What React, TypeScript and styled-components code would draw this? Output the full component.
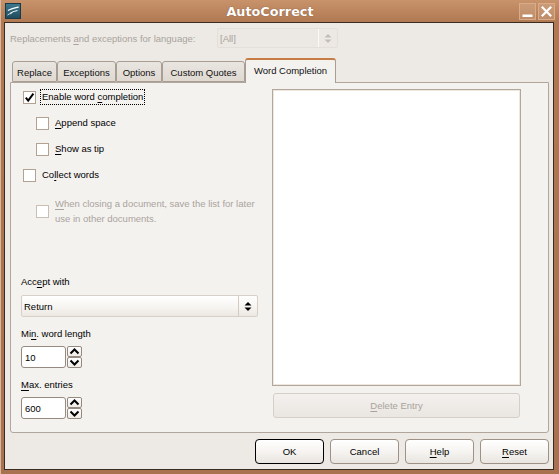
import React from 'react';
import styled, { createGlobalStyle } from 'styled-components';

const GlobalStyle = createGlobalStyle`
  html, body { margin: 0; padding: 0; background: #fff; }
  body {
    font-family: "Liberation Sans", Arial, sans-serif;
    font-size: 9.5px;
    color: #000;
  }
  #root { width: 559px; height: 474px; }
`;

const Window = styled.div`
  width: 559px;
  height: 474px;
  box-sizing: border-box;
  display: flex;
  flex-direction: column;
  background: linear-gradient(180deg, #c8926b 0px, #b07952 22px, #a87150 100%);
  border-left: 1px solid #dab89d;
  padding: 0 5px 4px 3px;
`;

const TitleBar = styled.div`
  height: 22px;
  display: flex;
  align-items: center;
  flex-shrink: 0;
`;

const AppIcon = styled.div`
  width: 16px;
  height: 16px;
  margin-left: 1px;
  display: flex;
`;

const Title = styled.div`
  flex: 1;
  text-align: center;
  font-family: "DejaVu Sans", sans-serif;
  font-weight: bold;
  font-size: 12.8px;
  color: #fff;
  text-shadow: 0 0 1px rgba(60, 30, 10, 0.6);
  padding-top: 1px;
`;

const WinButtons = styled.div`
  display: flex;
  gap: 2px;
  margin-right: -1px;
`;

const WinButton = styled.div`
  width: 17px;
  height: 17px;
  box-sizing: border-box;
  border: 1px solid #d9ab88;
  background: rgba(255, 240, 225, 0.14);
  display: flex;
  align-items: center;
  justify-content: center;
`;

const Client = styled.div`
  flex: 1;
  display: flex;
  flex-direction: column;
  background: #edeae5;
  border: 1px solid #3a2a20;
  min-height: 0;
`;

const LangRow = styled.div`
  display: flex;
  align-items: center;
  height: 20px;
  margin-top: 5px;
  padding-left: 5px;
  flex-shrink: 0;
`;

const LangLabel = styled.div`
  width: 207px;
  color: #a9a39c;
  white-space: nowrap;
`;

const ComboBox = styled.div<{ $disabled?: boolean; $w: number; $h: number }>`
  width: ${(p) => p.$w}px;
  height: ${(p) => p.$h}px;
  box-sizing: border-box;
  display: flex;
  align-items: stretch;
  border: 1px solid ${(p) => (p.$disabled ? '#e4dfd9' : '#d8d0c7')};
  border-radius: 2px;
  background: ${(p) =>
    p.$disabled
      ? '#ece8e3'
      : 'linear-gradient(180deg, #ffffff 0%, #f8f6f3 50%, #ece8e3 100%)'};
  color: ${(p) => (p.$disabled ? '#a9a39c' : '#000')};
`;

const ComboText = styled.div`
  flex: 1;
  display: flex;
  align-items: center;
  padding-left: 2px;
`;

const ComboArrows = styled.div<{ $disabled?: boolean }>`
  width: 18px;
  border-left: 1px solid ${(p) => (p.$disabled ? '#fafaf8' : '#d3cbc2')};
  display: flex;
  align-items: center;
  justify-content: center;
`;

const Notebook = styled.div`
  flex: 1;
  display: flex;
  flex-direction: column;
  margin: 10px 4px 0 5px;
  min-height: 0;
`;

const TabStrip = styled.div`
  height: 24px;
  display: flex;
  align-items: flex-end;
  padding-left: 2px;
  flex-shrink: 0;
  position: relative;
  z-index: 1;
`;

const Tab = styled.div<{ $w: number; $active?: boolean }>`
  width: ${(p) => p.$w}px;
  height: ${(p) => (p.$active ? 25 : 21)}px;
  margin-bottom: ${(p) => (p.$active ? -1 : 0)}px;
  box-sizing: border-box;
  display: flex;
  align-items: center;
  justify-content: center;
  border: 1px solid #a99e93;
  border-bottom: ${(p) => (p.$active ? 'none' : '1px solid #a99e93')};
  border-top: ${(p) => (p.$active ? '2px solid #c67c44' : '1px solid #a99e93')};
  border-radius: 3px 3px 0 0;
  background: ${(p) =>
    p.$active ? '#f4f2ef' : 'linear-gradient(180deg, #e9e5e0 0%, #dfd9d2 100%)'};
  padding-top: ${(p) => (p.$active ? 0 : 1)}px;
  padding-bottom: ${(p) => (p.$active ? 2 : 0)}px;
  white-space: nowrap;
  color: #111;
`;

const Panel = styled.div`
  flex: 1;
  display: grid;
  grid-template-columns: 237px 249px;
  column-gap: 14px;
  padding: 6px 26px 13px 10px;
  background: #f4f2ef;
  border: 1px solid #b1a69b;
  border-radius: 0 0 3px 3px;
  min-height: 0;
`;

const LeftCol = styled.div`
  display: flex;
  flex-direction: column;
`;

const CheckRow = styled.div<{ $indent?: boolean; $top?: number }>`
  display: flex;
  align-items: center;
  min-height: 16px;
  padding-left: ${(p) => (p.$indent ? 15 : 2)}px;
  margin-top: ${(p) => p.$top ?? 0}px;
`;

const Box = styled.span<{ $disabled?: boolean }>`
  width: 13px;
  height: 13px;
  box-sizing: border-box;
  flex-shrink: 0;
  border: 1px solid ${(p) => (p.$disabled ? '#cbbfb3' : '#b3a191')};
  background: #fff;
  display: flex;
  align-items: center;
  justify-content: center;
  margin-right: 4px;
`;

const CheckLabel = styled.span<{ $focused?: boolean; $disabled?: boolean }>`
  border: 1px ${(p) => (p.$focused ? 'dotted #000' : 'solid transparent')};
  padding: 2px 1px 2px 1px;
  line-height: ${(p) => (p.$disabled ? 15 : 10)}px;
  color: ${(p) => (p.$disabled ? '#a9a39c' : '#000')};
  white-space: nowrap;
`;

const U = styled.span`
  text-decoration: underline;
  text-underline-offset: 2px;
`;

const LowerGroup = styled.div`
  margin-top: auto;
  display: flex;
  flex-direction: column;
`;

const FieldLabel = styled.div<{ $top?: number; $shift?: number }>`
  height: 14px;
  box-sizing: border-box;
  padding-top: ${(p) => p.$shift ?? 0}px;
  line-height: 14px;
  margin-top: ${(p) => p.$top ?? 0}px;
  margin-bottom: 7px;
  white-space: nowrap;
`;

const SpinRow = styled.div`
  display: flex;
  height: 22px;
`;

const SpinEntry = styled.div`
  width: 45px;
  height: 22px;
  box-sizing: border-box;
  border: 1px solid #958a7f;
  border-radius: 3px;
  background: #fff;
  display: flex;
  align-items: center;
  padding-left: 3px;
`;

const SpinButtons = styled.div`
  display: flex;
  flex-direction: column;
  margin-left: 1px;
`;

const SpinBtn = styled.div`
  width: 15px;
  height: 11px;
  box-sizing: border-box;
  border: 1px solid #958a7f;
  border-radius: 2px;
  background: linear-gradient(180deg, #ffffff 0%, #efebe6 100%);
  display: flex;
  align-items: center;
  justify-content: center;
`;

const RightCol = styled.div`
  display: flex;
  flex-direction: column;
`;

const ListBox = styled.div`
  flex: 1;
  border: 1px solid #b4a699;
  background: #fff;
  box-shadow: inset 0 0 0 1px #ece7e1;
`;

const DeleteButton = styled.div`
  height: 25px;
  margin: 7px 1px 1px 1px;
  box-sizing: border-box;
  border: 1px solid #d6cfc7;
  border-radius: 3px;
  background: linear-gradient(180deg, #f3f1ee 0%, #eae6e1 100%);
  color: #a9a39c;
  display: flex;
  align-items: center;
  justify-content: center;
`;

const ButtonRow = styled.div`
  display: flex;
  justify-content: flex-end;
  gap: 6px;
  height: 25px;
  margin: 6px 4px 5px 0;
  flex-shrink: 0;
`;

const DialogButton = styled.div<{ $default?: boolean }>`
  width: 69px;
  height: 25px;
  box-sizing: border-box;
  border: 1px solid ${(p) => (p.$default ? '#000' : '#9e9185')};
  border-radius: 4px;
  background: linear-gradient(180deg, #ffffff 0%, #f6f4f1 50%, #e9e5e0 100%);
  display: flex;
  align-items: center;
  justify-content: center;
  padding-bottom: 1px;
`;

const Check = () => (
  <svg width="11" height="11" viewBox="0 0 11 11">
    <path d="M1.8 5.6 L4.2 8.6 L9.4 1.6" fill="none" stroke="#000" strokeWidth="2" />
  </svg>
);

const UpDown = ({ color }: { color: string }) => (
  <svg width="8" height="11" viewBox="0 0 8 11">
    <path d="M0.5 4.5 L4 1 L7.5 4.5 Z" fill={color} />
    <path d="M0.5 6.5 L4 10 L7.5 6.5 Z" fill={color} />
  </svg>
);

const Chevron = ({ up }: { up?: boolean }) => (
  <svg width="11" height="7" viewBox="0 0 11 7">
    <path
      d={up ? 'M1.5 5.5 L5.5 1.5 L9.5 5.5' : 'M1.5 1.5 L5.5 5.5 L9.5 1.5'}
      fill="none"
      stroke="#000"
      strokeWidth="2"
    />
  </svg>
);

const Spin = ({ value }: { value: string }) => (
  <SpinRow>
    <SpinEntry>{value}</SpinEntry>
    <SpinButtons>
      <SpinBtn>
        <Chevron up />
      </SpinBtn>
      <SpinBtn>
        <Chevron />
      </SpinBtn>
    </SpinButtons>
  </SpinRow>
);

export default function App() {
  return (
    <>
      <GlobalStyle />
      <Window>
        <TitleBar>
          <AppIcon>
            <svg width="16" height="16" viewBox="0 0 16 16">
              <defs>
                <linearGradient id="ic" x1="0" y1="0" x2="0" y2="1">
                  <stop offset="0" stopColor="#3f7a90" />
                  <stop offset="1" stopColor="#1e4a5c" />
                </linearGradient>
              </defs>
              <rect x="0.5" y="0.5" width="15" height="15" fill="url(#ic)" stroke="#1a3a48" />
              <path d="M3 7.5 C6 5.5 9 5 13.5 4" fill="none" stroke="#fff" strokeWidth="1.3" />
              <path d="M5 10.5 C7.5 8.5 9.5 8 12.5 7.5" fill="none" stroke="#fff" strokeWidth="1.1" />
              <path d="M2.5 12 C4 11 5 10.6 6.5 10.4" fill="none" stroke="#dfe9ee" strokeWidth="0.9" />
            </svg>
          </AppIcon>
          <Title>AutoCorrect</Title>
          <WinButtons>
            <WinButton>
              <svg width="13" height="13" viewBox="0 0 13 13">
                <rect x="1.5" y="9.5" width="10" height="2.5" fill="#fff" />
              </svg>
            </WinButton>
            <WinButton>
              <svg width="13" height="13" viewBox="0 0 13 13">
                <path d="M1.8 1.8 L11.2 11.2 M11.2 1.8 L1.8 11.2" stroke="#fff" strokeWidth="2.2" />
              </svg>
            </WinButton>
          </WinButtons>
        </TitleBar>
        <Client>
          <LangRow>
            <LangLabel>
              Replacements <U>a</U>nd exceptions for language:
            </LangLabel>
            <ComboBox $disabled $w={121} $h={20}>
              <ComboText>[All]</ComboText>
              <ComboArrows $disabled>
                <UpDown color="#c4bdb5" />
              </ComboArrows>
            </ComboBox>
          </LangRow>
          <Notebook>
            <TabStrip>
              <Tab $w={45}>Replace</Tab>
              <Tab $w={59}>Exceptions</Tab>
              <Tab $w={46}>Options</Tab>
              <Tab $w={83}>Custom Quotes</Tab>
              <Tab $w={91} $active>
                Word Completion
              </Tab>
            </TabStrip>
            <Panel>
              <LeftCol>
                <CheckRow>
                  <Box>
                    <Check />
                  </Box>
                  <CheckLabel $focused>
                    Enable word <U>c</U>ompletion
                  </CheckLabel>
                </CheckRow>
                <CheckRow $indent $top={10}>
                  <Box />
                  <CheckLabel>
                    <U>A</U>ppend space
                  </CheckLabel>
                </CheckRow>
                <CheckRow $indent $top={10}>
                  <Box />
                  <CheckLabel>
                    <U>S</U>how as tip
                  </CheckLabel>
                </CheckRow>
                <CheckRow $top={10}>
                  <Box />
                  <CheckLabel>
                    Co<U>l</U>lect words
                  </CheckLabel>
                </CheckRow>
                <CheckRow $indent $top={10}>
                  <Box $disabled />
                  <CheckLabel $disabled>
                    <U>W</U>hen closing a document, save the list for later
                    <br />
                    use in other documents.
                  </CheckLabel>
                </CheckRow>
                <LowerGroup>
                  <FieldLabel $shift={1}>
                    Acc<U>e</U>pt with
                  </FieldLabel>
                  <ComboBox $w={237} $h={22}>
                    <ComboText>Return</ComboText>
                    <ComboArrows>
                      <UpDown color="#000" />
                    </ComboArrows>
                  </ComboBox>
                  <FieldLabel $top={8} $shift={2}>
                    Mi<U>n</U>. word length
                  </FieldLabel>
                  <Spin value="10" />
                  <FieldLabel $top={8} $shift={2}>
                    <U>M</U>ax. entries
                  </FieldLabel>
                  <Spin value="600" />
                </LowerGroup>
              </LeftCol>
              <RightCol>
                <ListBox />
                <DeleteButton>
                  <span>
                    <U>D</U>elete Entry
                  </span>
                </DeleteButton>
              </RightCol>
            </Panel>
          </Notebook>
          <ButtonRow>
            <DialogButton $default>OK</DialogButton>
            <DialogButton>Cancel</DialogButton>
            <DialogButton>
              <span>
                <U>H</U>elp
              </span>
            </DialogButton>
            <DialogButton>
              <span>
                <U>R</U>eset
              </span>
            </DialogButton>
          </ButtonRow>
        </Client>
      </Window>
    </>
  );
}
